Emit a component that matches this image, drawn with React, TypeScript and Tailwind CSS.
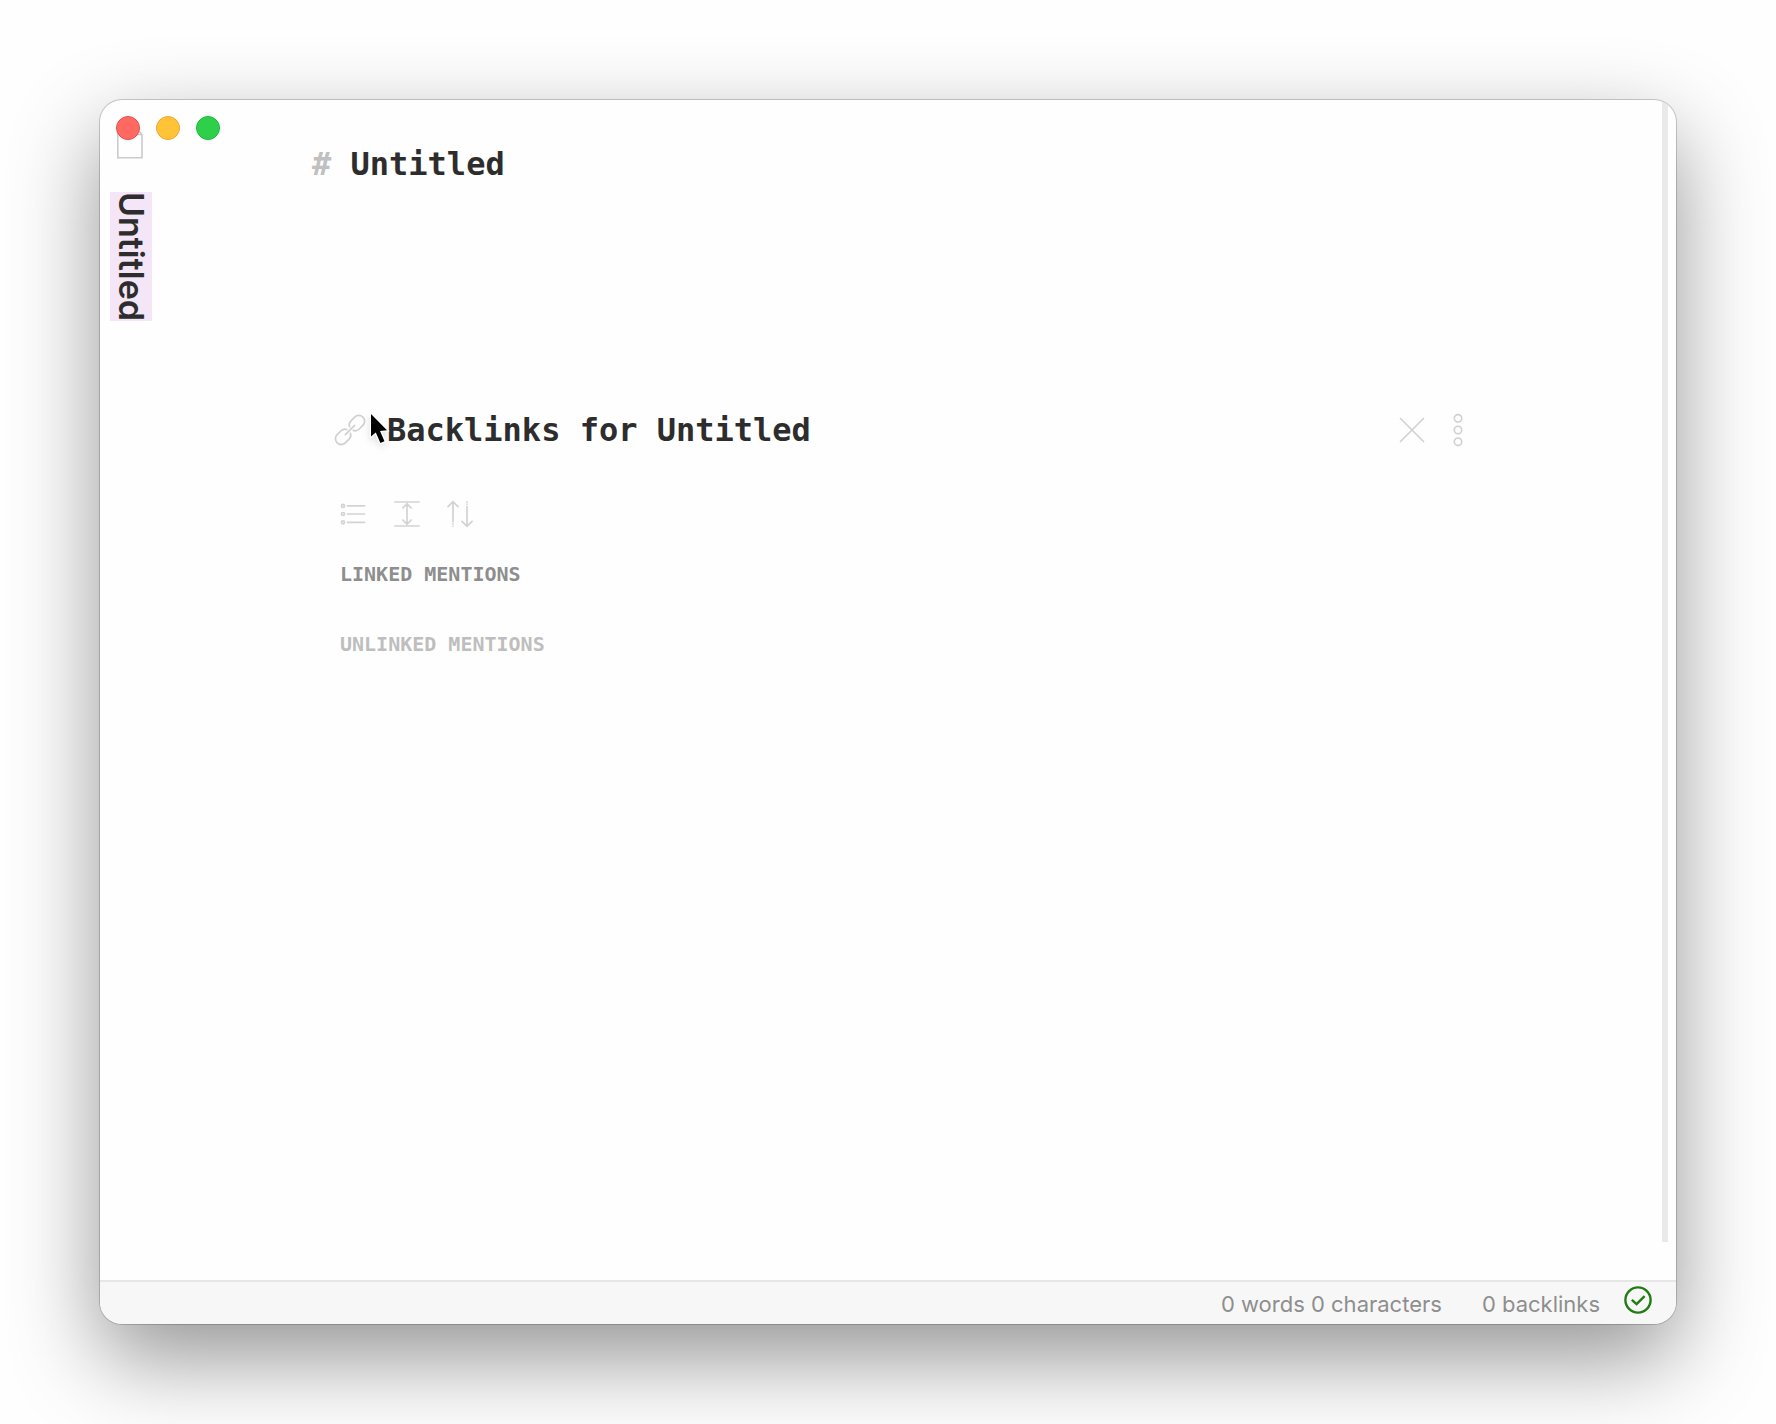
import React from "react";

const mono = "font-['DejaVu_Sans_Mono',monospace]";

function TrafficLights() {
  return (
    <div className="absolute left-4 top-4 z-10 flex gap-4">
      <button aria-label="Close window" className="size-6 rounded-full border border-[#e2504a] bg-[#ff6961]" />
      <button aria-label="Minimise window" className="size-6 rounded-full border border-[#e5a935] bg-[#ffc338]" />
      <button aria-label="Zoom window" className="size-6 rounded-full border border-[#27b53c] bg-[#2fd049]" />
    </div>
  );
}

function DocumentIcon() {
  return (
    <svg width="28" height="36" viewBox="0 0 28 36" fill="none" stroke="#cbcbcb" strokeWidth="1.6" aria-hidden="true">
      <path d="M1.8 1.8H17.5L26 10.5V33.8H1.8Z" />
      <path d="M17.5 1.8V10.5H26" />
    </svg>
  );
}

function LinkIcon() {
  return (
    <svg width="32" height="32" viewBox="0 0 32 32" fill="none" stroke="#d0d0d0" strokeWidth="1.7" strokeLinecap="round" aria-hidden="true">
      <g transform="rotate(-45 16 16)">
        <path d="M14 18.6A5.8 5.8 0 0 1 8.8 21.8H3.6A5.8 5.8 0 0 1 3.6 10.2H8.8A5.8 5.8 0 0 1 14 13.4" />
        <path d="M18 13.4A5.8 5.8 0 0 1 23.2 10.2H28.4A5.8 5.8 0 0 1 28.4 21.8H23.2A5.8 5.8 0 0 1 18 18.6" />
        <path d="M9.5 16H22.5" />
      </g>
    </svg>
  );
}

function CloseIcon() {
  return (
    <svg width="26" height="26" viewBox="0 0 26 26" fill="none" stroke="#d0d0d0" strokeWidth="1.6" strokeLinecap="round" aria-hidden="true">
      <path d="M1.5 1.5 24.5 24.5M24.5 1.5 1.5 24.5" />
    </svg>
  );
}

function MoreIcon() {
  return (
    <svg width="12" height="34" viewBox="0 0 12 34" fill="none" stroke="#d0d0d0" strokeWidth="1.6" aria-hidden="true">
      <circle cx="6" cy="5.3" r="3.7" />
      <circle cx="6" cy="17" r="3.7" />
      <circle cx="6" cy="28.7" r="3.7" />
    </svg>
  );
}

function ListIcon() {
  return (
    <svg width="28" height="28" viewBox="0 0 28 28" fill="none" stroke="#d3d3d3" strokeWidth="1.7" strokeLinecap="round" aria-hidden="true">
      <circle cx="3" cy="5.9" r="1.5" />
      <circle cx="3" cy="14" r="1.5" />
      <circle cx="3" cy="22.3" r="1.5" />
      <path d="M7.5 5.9H24.5M7.5 14H24.5M7.5 22.3H24.5" />
    </svg>
  );
}

function ExpandIcon() {
  return (
    <svg width="28" height="28" viewBox="0 0 28 28" fill="none" stroke="#d3d3d3" strokeWidth="1.7" strokeLinecap="round" aria-hidden="true">
      <path d="M2 2H26M2 26H26M14 4V24M9.8 8 14 3.8 18.2 8M9.8 20 14 24.2 18.2 20" />
    </svg>
  );
}

function SortIcon() {
  return (
    <svg width="28" height="28" viewBox="0 0 28 28" fill="none" stroke="#d3d3d3" strokeWidth="1.7" strokeLinecap="round" aria-hidden="true">
      <path d="M7 1.8V21.5M2 6.6 7 1.6 12 6.6M7 23.7V23.8M7 26V26.1" />
      <path d="M21 26.2V6.5M16 21.4 21 26.4 26 21.4M21 4.3V4.2M21 2V1.9" />
    </svg>
  );
}

function CheckIcon() {
  return (
    <svg width="28" height="28" viewBox="0 0 28 28" fill="none" stroke="#1f7d12" strokeWidth="2.4" aria-hidden="true">
      <circle cx="14" cy="14" r="12.6" />
      <path d="M7.8 13.8 12.6 18.2 20.6 10.2" />
    </svg>
  );
}

function Pointer() {
  return (
    <svg className="pointer-events-none absolute left-8 top-1 z-10 drop-shadow-md" width="26" height="38" viewBox="0 0 26 38" aria-hidden="true">
      <path
        d="M5 2V24.5L9.8 20.4L14.4 31L18.5 29.2L14 18.9L21 18.2Z"
        fill="#000"
        stroke="#fff"
        strokeWidth="2.4"
        paintOrder="stroke"
      />
    </svg>
  );
}

export default function App() {
  return (
    <div className="flex min-h-screen flex-col bg-[#fefefe] p-[100px]">
      <div className="relative flex flex-1 flex-col overflow-clip rounded-[22px] bg-[#fefefe] shadow-[0_0_0_1px_rgba(0,0,0,0.18),0_34px_88px_rgba(0,0,0,0.42)]">
        <TrafficLights />
        <div className="flex flex-1">
          <aside className="flex w-[212px] shrink-0 flex-col items-start gap-8 pl-[10px] pt-6">
            <div className="pl-[6px]">
              <DocumentIcon />
            </div>
            <div className="bg-[#f4e6f7] font-['Inter',sans-serif] text-[34px] leading-[42px] font-semibold text-[#2d2d2d] [writing-mode:vertical-rl]">
              Untitled
            </div>
          </aside>
          <main className={`min-w-0 flex-1 pt-[43px] text-[#2d2d2d] ${mono}`}>
            <h1 className="text-[32px] leading-[42px] font-bold">
              <span className="text-[#c0c0c0]">#</span> Untitled
            </h1>
            <section className="mt-[223px] pl-[22px]">
              <div className="relative flex items-center">
                <LinkIcon />
                <Pointer />
                <h2 className="ml-[21px] flex-1 text-[32px] leading-[44px] font-bold">Backlinks for Untitled</h2>
                <button aria-label="Close backlinks">
                  <CloseIcon />
                </button>
                <button aria-label="More options" className="ml-[27px]">
                  <MoreIcon />
                </button>
              </div>
              <div className="mt-12 flex gap-[25px] pl-[6px]">
                <button aria-label="Toggle list"><ListIcon /></button>
                <button aria-label="Expand context"><ExpandIcon /></button>
                <button aria-label="Change sort order"><SortIcon /></button>
              </div>
              <div className="mt-8 flex flex-col items-start gap-[42px] pl-[6px] text-xl leading-7 font-bold">
                <button className="text-[#8e8e8e]">LINKED MENTIONS</button>
                <button className="text-[#bebebe]">UNLINKED MENTIONS</button>
              </div>
            </section>
          </main>
          <div className="flex w-[212px] shrink-0 justify-end pb-[38px] pr-2">
            <div className="w-[6px] bg-[#e9e9e9]" />
          </div>
        </div>
        <footer className="flex h-11 items-center justify-end border-t-2 border-[#e6e6e6] bg-[#f7f7f7] pr-6 font-['Inter',sans-serif] text-[22px] leading-7 text-[#8e8e8e]">
          <span className="pt-[2px]">0 words 0 characters</span>
          <span className="ml-10 pt-[2px]">0 backlinks</span>
          <button aria-label="Sync status" className="mb-[6px] ml-6">
            <CheckIcon />
          </button>
        </footer>
      </div>
    </div>
  );
}
